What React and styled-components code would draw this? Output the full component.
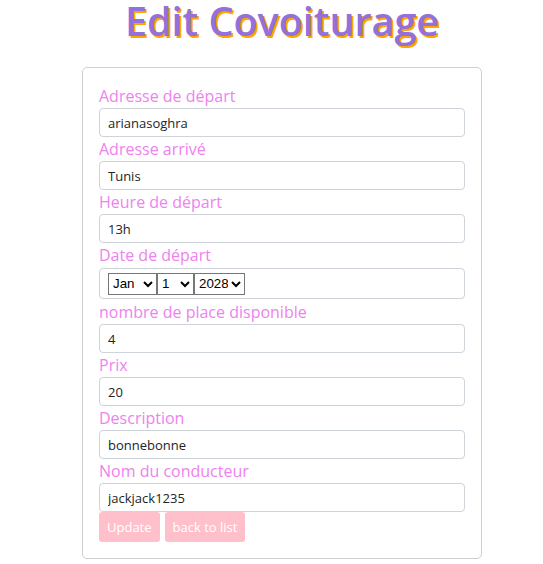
import React from "react";
import styled, { createGlobalStyle } from "styled-components";

const Global = createGlobalStyle`
  html, body { margin: 0; padding: 0; background: #fff; }
  body { font-family: "Open Sans", sans-serif; }
`;

const Page = styled.div`
  display: flex;
  flex-direction: column;
  align-items: center;
  padding-left: 21px;
`;

const Title = styled.h1`
  margin: 0;
  font-family: "Open Sans", sans-serif;
  font-weight: 600;
  font-size: 39.5px;
  line-height: 42px;
  color: #9370db;
  text-shadow: 2px 2px 0 #ffa500;
  margin-bottom: 25px;
`;

const Card = styled.form`
  width: 366px;
  padding: 16px;
  border: 1px solid #cfcfcf;
  border-radius: 5px;
  display: flex;
  flex-direction: column;
`;

const Label = styled.label`
  display: block;
  color: #ee82ee;
  font-size: 16px;
  line-height: 24px;
`;

const Input = styled.input`
  box-sizing: border-box;
  width: 100%;
  height: 29px;
  padding: 0 8px;
  font-family: "Open Sans", sans-serif;
  font-size: 13px;
  color: #212529;
  border: 1px solid #ced4da;
  border-radius: 4px;
  outline: none;
`;

const DateBox = styled.div`
  box-sizing: border-box;
  width: 100%;
  height: 31px;
  padding: 2px 8px;
  border: 1px solid #ced4da;
  border-radius: 4px;
  display: flex;
  align-items: center;
  margin-top: 1px;
  margin-bottom: 1px;
`;

const Select = styled.select`
  font-family: "Liberation Sans", Arial, sans-serif;
  font-size: 13.33px;
  height: 22px;
  width: ${(p) => p.$w}px;
  margin: 0;
  color: #000;
  border: 1px solid #767676;
  border-radius: 0;
  background: #fff;
`;

const Buttons = styled.div`
  display: flex;
  gap: 5px;
`;

const Button = styled.button`
  background: #ffc0cb;
  color: #fff;
  border: none;
  border-radius: 3px;
  font-family: "Open Sans", sans-serif;
  font-size: 13px;
  height: 30px;
  padding: 0 8px;
`;

const fields = [
  ["Adresse de départ", "arianasoghra"],
  ["Adresse arrivé", "Tunis"],
  ["Heure de départ", "13h"],
];
const fields2 = [
  ["nombre de place disponible", "4"],
  ["Prix", "20"],
  ["Description", "bonnebonne"],
  ["Nom du conducteur", "jackjack1235"],
];

export default function App() {
  return (
    <>
      <Global />
      <Page>
        <Title>Edit Covoiturage</Title>
        <Card onSubmit={(e) => e.preventDefault()}>
          {fields.map(([l, v]) => (
            <React.Fragment key={l}>
              <Label>{l}</Label>
              <Input defaultValue={v} />
            </React.Fragment>
          ))}
          <Label>Date de départ</Label>
          <DateBox>
            <Select $w={49} defaultValue="Jan">
              <option>Jan</option>
            </Select>
            <Select $w={37} defaultValue="1">
              <option>1</option>
            </Select>
            <Select $w={51} defaultValue="2028">
              <option>2028</option>
            </Select>
          </DateBox>
          {fields2.map(([l, v]) => (
            <React.Fragment key={l}>
              <Label>{l}</Label>
              <Input defaultValue={v} />
            </React.Fragment>
          ))}
          <Buttons>
            <Button type="button">Update</Button>
            <Button type="button">back to list</Button>
          </Buttons>
        </Card>
      </Page>
    </>
  );
}
